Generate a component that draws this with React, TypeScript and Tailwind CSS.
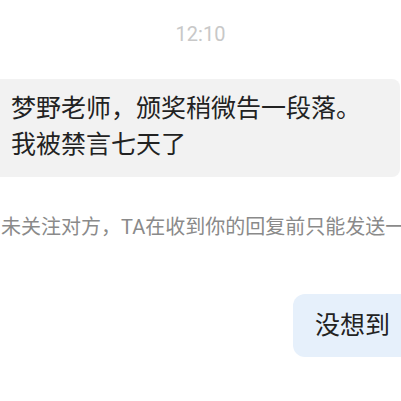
import React from 'react';

const font = { fontFamily: 'Roboto, "Noto Sans CJK SC", sans-serif' };

const App = () => {
  return (
    <div className="w-[401px] h-[401px] bg-white overflow-hidden flex flex-col" style={font}>
      {/* timestamp */}
      <div className="pt-[21px] h-[79px] text-center text-[20px] leading-[26px] text-[#c8c8c8]">
        12:10
      </div>

      {/* incoming bubble */}
      <div className="w-[400px] h-[98px] bg-[#f2f2f2] rounded-r-[8px] pl-[11px] pt-[12px] text-[25px] leading-[36px] text-[#222222]">
        <p>梦野老师，颁奖稍微告一段落。</p>
        <p>我被禁言七天了</p>
      </div>

      {/* notice */}
      <div className="mt-[36px] pl-[1px] whitespace-nowrap text-[20px] leading-[28px] text-[#8a8a8a]">
        未关注对方，TA在收到你的回复前只能发送一
      </div>

      {/* outgoing bubble */}
      <div className="mt-[53px] flex justify-end">
        <div className="w-[108px] h-[63px] bg-[#e6f0fb] rounded-l-[12px] pl-[22px] flex items-center text-[25px] text-[#222222]">
          没想到
        </div>
      </div>
    </div>
  );
};

export default App;
